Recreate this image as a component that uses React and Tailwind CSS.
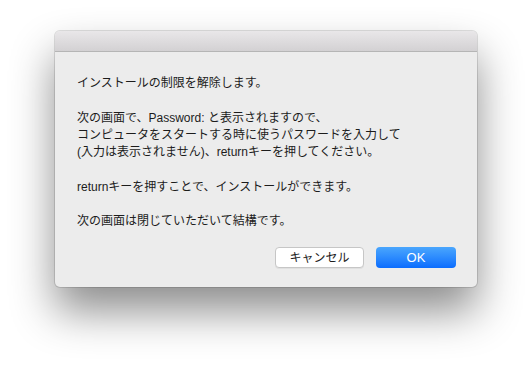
import React from 'react';

const lines = [
  'インストールの制限を解除します。',
  '',
  '次の画面で、Password: と表示されますので、',
  'コンピュータをスタートする時に使うパスワードを入力して',
  '(入力は表示されません)、returnキーを押してください。',
  '',
  'returnキーを押すことで、インストールができます。',
  '',
  '次の画面は閉じていただいて結構です。',
];

const App = () => {
  return (
    <div
      className="w-[532px] h-[368px] bg-white pt-[31px] pl-[55px]"
      style={{ fontFamily: '"Liberation Sans", "Noto Sans CJK JP", sans-serif' }}
    >
      <div className="w-[422px] h-[256px] rounded-[5px] bg-[#ececec] flex flex-col overflow-hidden shadow-[0_0_0_1px_rgba(0,0,0,0.12),0_24px_44px_rgba(0,0,0,0.45)]">
        {/* Title bar */}
        <div className="h-[21px] shrink-0 bg-gradient-to-b from-[#e9e7e9] to-[#d3d1d3] border-b border-[#b5b5b5]" />

        {/* Message */}
        <div className="pt-[23px] px-[22px] text-[12px] leading-[17.25px] text-[#1c1c1c]">
          {lines.map((l, i) => (
            <div key={i} className="h-[17.25px] whitespace-nowrap">{l}</div>
          ))}
        </div>

        {/* Buttons */}
        <div className="flex justify-end gap-[12px] pr-[21px] mt-[17px]">
          <button className="w-[89px] h-[21px] rounded-[4px] bg-white border border-[#c6c6c6] text-[12px] text-[#1c1c1c] leading-none shadow-[0_1px_0_rgba(0,0,0,0.05)]">
            キャンセル
          </button>
          <button className="w-[80px] h-[21px] rounded-[4px] bg-gradient-to-b from-[#4aa6fd] to-[#0a6cfe] text-[13px] text-white leading-none">
            OK
          </button>
        </div>
      </div>
    </div>
  );
};

export default App;
